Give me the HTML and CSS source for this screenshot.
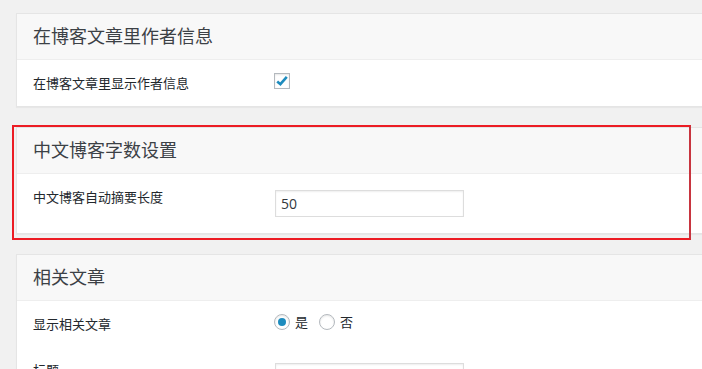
FILE: index.html
```html
<!DOCTYPE html>
<html lang="zh-CN">
<head>
    <meta charset="UTF-8">
    <meta name="viewport" content="width=device-width, initial-scale=1.0">
    <title>博客设置</title>
    <link rel="stylesheet" href="styles.css">
</head>
<body>

<div class="wrap">
    <!-- 作者信息 -->
    <div class="postbox">
        <h3 class="postbox-title">在博客文章里作者信息</h3>
        <div class="postbox-body">
            <div class="field-row">
                <div class="field-label">在博客文章里显示作者信息</div>
                <div class="field-control">
                    <span class="checkbox">
                        <svg width="14" height="14" viewBox="0 0 14 14"><path d="M2.2 7.4 L5.4 10.2 L11.8 2.8" fill="none" stroke="#1e8cbe" stroke-width="2.6"/></svg>
                    </span>
                </div>
            </div>
        </div>
    </div>

    <!-- 字数设置 (红框标注) -->
    <div class="postbox highlighted">
        <h3 class="postbox-title">中文博客字数设置</h3>
        <div class="postbox-body">
            <div class="field-row">
                <div class="field-label">中文博客自动摘要长度</div>
                <div class="field-control">
                    <input class="text-input" type="text" value="50">
                </div>
            </div>
        </div>
        <div class="mark-box"></div>
    </div>

    <!-- 相关文章 -->
    <div class="postbox">
        <h3 class="postbox-title">相关文章</h3>
        <div class="postbox-body">
            <div class="field-row">
                <div class="field-label">显示相关文章</div>
                <div class="field-control radios">
                    <label class="radio-item"><span class="radio checked"></span>是</label>
                    <label class="radio-item"><span class="radio"></span>否</label>
                </div>
            </div>
            <div class="field-row">
                <div class="field-label">标题</div>
                <div class="field-control">
                    <input class="text-input" type="text" value="">
                </div>
            </div>
        </div>
    </div>
</div>

</body>
</html>
```

FILE: styles.css
```css
/* 基本样式 */
body {
    margin: 0;
    background-color: #f1f1f1;
    font-family: "Open Sans", "Noto Sans CJK SC", sans-serif;
    color: #23282d;
    overflow: hidden;
}

.wrap {
    padding: 13px 0 0 16px;
    width: 720px;
}

.postbox {
    background-color: #fff;
    border: 1px solid #e5e5e5;
    box-shadow: 0 1px 1px rgba(0, 0, 0, 0.04);
    margin-bottom: 20px;
}

.postbox-title {
    margin: 0;
    padding: 10px 16px 11px;
    font-size: 18px;
    line-height: 24px;
    font-weight: normal;
    color: #3c4146;
    background-color: #f8f8f8;
    border-bottom: 1px solid #eee;
}

.postbox-body {
    padding: 0 16px;
}

.field-row {
    display: flex;
    align-items: flex-start;
    padding: 13px 0;
}

.field-label {
    width: 241px;
    font-size: 13px;
    line-height: 20px;
}

.field-control {
    flex: 1;
}

/* 复选框 */
.checkbox {
    display: flex;
    align-items: center;
    justify-content: center;
    width: 14px;
    height: 14px;
    border: 1px solid #b4b9be;
    background-color: #fff;
    box-shadow: inset 0 1px 2px rgba(0, 0, 0, 0.1);
}

/* 文本框 */
.text-input {
    display: block;
    margin: 3px 0 3px 1px;
    width: 189px;
    height: 27px;
    box-sizing: border-box;
    padding: 0 5px;
    border: 1px solid #ddd;
    box-shadow: inset 0 1px 2px rgba(0, 0, 0, 0.07);
    font-family: "Open Sans", sans-serif;
    font-size: 14px;
    color: #32373c;
    outline: none;
}

/* 单选框 */
.radios {
    display: flex;
    align-items: center;
    font-size: 13px;
    line-height: 16px;
}

.radio-item {
    display: flex;
    align-items: center;
    gap: 5px;
    margin-right: 11px;
}

.radio {
    width: 14px;
    height: 14px;
    border: 1px solid #b4b9be;
    border-radius: 50%;
    box-shadow: inset 0 1px 2px rgba(0, 0, 0, 0.1);
    display: flex;
    align-items: center;
    justify-content: center;
}

.radio.checked::before {
    content: "";
    width: 8px;
    height: 8px;
    border-radius: 50%;
    background-color: #1e8cbe;
}

/* 红框标注 */
.highlighted {
    position: relative;
}

.mark-box {
    position: absolute;
    left: -5px;
    top: -3px;
    width: 679px;
    height: 115px;
    box-sizing: border-box;
    border: 2px solid #ec1c24;
    border-right-color: #c8353f;
}
```
